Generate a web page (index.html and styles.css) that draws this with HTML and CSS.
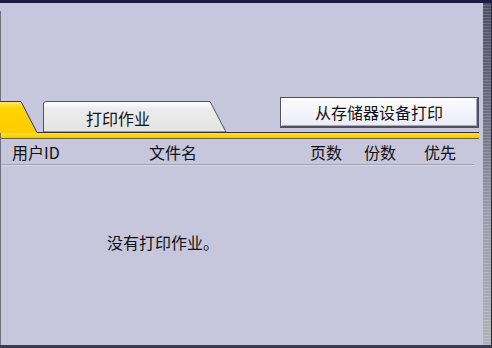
FILE: index.html
```html
<!DOCTYPE html>
<html lang="zh-CN">
<head>
    <meta charset="UTF-8">
    <title>打印作业</title>
    <link rel="stylesheet" href="styles.css">
</head>
<body>
    <div class="screen">
        <div class="main">
            <div class="tab-row">
                <div class="tab tab-active">
                    <svg class="tab-shape" width="38" height="32" viewBox="0 0 38 32">
                        <defs>
                            <linearGradient id="yel" x1="0" y1="0" x2="0" y2="1">
                                <stop offset="0" stop-color="#ffe680"/>
                                <stop offset="0.2" stop-color="#ffd400"/>
                                <stop offset="1" stop-color="#ffcc00"/>
                            </linearGradient>
                        </defs>
                        <path d="M-1 0.5 H21 L37 31.5 V32 H-1 Z" fill="url(#yel)"/>
                        <path d="M-1 0.5 H21 L37 31.5 H38" fill="none" stroke="#3a3a3a" stroke-width="1"/>
                    </svg>
                </div>
                <div class="tab tab-job">
                    <svg class="tab-shape" width="184" height="31" viewBox="0 0 184 31">
                        <defs>
                            <linearGradient id="gry" x1="0" y1="0" x2="0" y2="1">
                                <stop offset="0" stop-color="#ffffff"/>
                                <stop offset="0.25" stop-color="#ececec"/>
                                <stop offset="1" stop-color="#e4e4e4"/>
                            </linearGradient>
                        </defs>
                        <path d="M0.5 31 V3 Q0.5 0.5 3 0.5 H167 L183 31 Z" fill="url(#gry)" stroke="#555" stroke-width="1"/>
                    </svg>
                    <span class="tab-label">打印作业</span>
                </div>
                <button class="btn-storage">从存储器设备打印</button>
            </div>
            <div class="tab-line"></div>

            <div class="list-head">
                <span>用户ID</span>
                <span>文件名</span>
                <span>页数</span>
                <span>份数</span>
                <span>优先</span>
            </div>
            <div class="list-sep"></div>

            <p class="empty">没有打印作业。</p>
        </div>
        <div class="scrollbar"></div>
    </div>
</body>
</html>
```

FILE: styles.css
```css
body {
    margin: 0;
    padding: 0;
    width: 492px;
    height: 348px;
    overflow: hidden;
    background: #c6c6dd;
    font-family: "Noto Sans CJK SC", "Noto Sans", sans-serif;
    font-size: 16px;
    color: #111;
}

.screen {
    display: flex;
    height: 348px;
    box-sizing: border-box;
    border-top: 3px solid #1c1c44;
    border-bottom: 3px solid #3a3a52;
}

.main {
    flex: 1;
    margin-top: 8px;
    border-left: 1px solid #707080;
}

.tab-row {
    display: flex;
    align-items: flex-end;
    height: 35px;
    margin-top: 86px;
    margin-right: 4px;
}

.tab {
    position: relative;
}

.tab-shape {
    position: absolute;
    left: 0;
    top: 0;
    display: block;
}

.tab-active {
    width: 37px;
    height: 32px;
    margin-bottom: -1px;
    z-index: 1;
}

.tab-active .tab-shape {
    left: -1px;
}

.tab-job {
    width: 184px;
    height: 31px;
    margin-left: 5px;
}

.tab-label {
    position: relative;
    display: block;
    padding-left: 43px;
    padding-top: 2px;
    line-height: 30px;
}

.btn-storage {
    align-self: flex-start;
    margin-left: auto;
    width: 199px;
    height: 31px;
    padding: 0;
    font-family: inherit;
    font-size: 16px;
    color: #111;
    background: linear-gradient(#fcfcff, #ececf6);
    border: 1px solid #505060;
    border-right-width: 2px;
    border-bottom-width: 2px;
    box-shadow: inset 1px 1px 0 #fff, inset -1px -1px 0 #a8a8b8;
}

.tab-line {
    height: 5px;
    margin-right: 4px;
    border-top: 1px solid #333;
    border-bottom: 1px solid #6a6440;
    background: linear-gradient(#ffe040, #ffd200 60%, #f4c800);
}

.list-head {
    display: grid;
    grid-template-columns: 137px 161px 54px 60px auto;
    align-items: center;
    height: 25px;
    padding-left: 11px;
    line-height: 16px;
}

.list-sep {
    height: 1px;
    margin-right: 9px;
    background: #a4a4b0;
    border-bottom: 1px solid #d8d8e6;
}

.empty {
    margin: 68px 0 0 106px;
    line-height: 16px;
}

.scrollbar {
    width: 8px;
    border-right: 1px solid #2a2a3a;
    background:
        repeating-linear-gradient(#0000 0 2px, rgba(255,255,255,0.18) 2px 3px),
        linear-gradient(#4e4e66, #6a6a80 30%, #9a9aa6 60%, #b0b0b6);
}
```
